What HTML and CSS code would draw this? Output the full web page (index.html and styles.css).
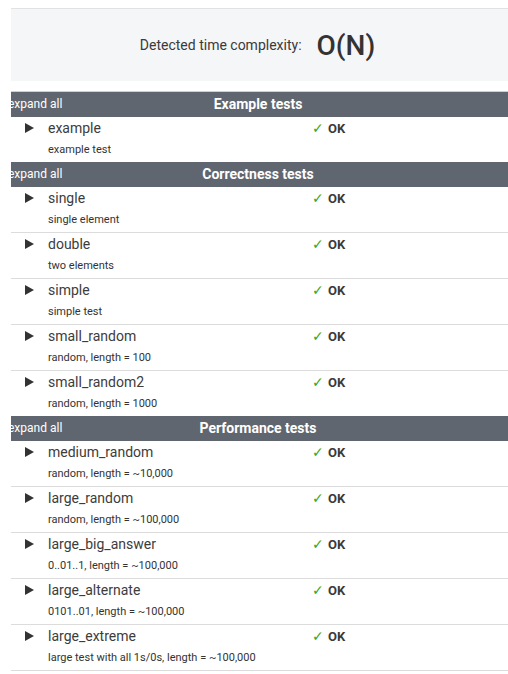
FILE: index.html
```html
<!DOCTYPE html>
<html>
<head>
<meta charset="utf-8">
<link rel="stylesheet" href="styles.css">
</head>
<body>
<div class="page">
  <div class="summary">
    <span class="summary-label">Detected time complexity:</span>
    <span class="summary-value">O(N)</span>
  </div>

  <div class="group">
    <div class="group-head"><span class="expand">expand all</span><span class="group-title">Example tests</span></div>
    <div class="row"><span class="tri"></span><div class="info"><div class="name">example</div><div class="desc">example test</div></div><div class="res"><span class="check">✓</span> OK</div></div>
  </div>

  <div class="group">
    <div class="group-head"><span class="expand">expand all</span><span class="group-title">Correctness tests</span></div>
    <div class="row"><span class="tri"></span><div class="info"><div class="name">single</div><div class="desc">single element</div></div><div class="res"><span class="check">✓</span> OK</div></div>
    <div class="row"><span class="tri"></span><div class="info"><div class="name">double</div><div class="desc">two elements</div></div><div class="res"><span class="check">✓</span> OK</div></div>
    <div class="row"><span class="tri"></span><div class="info"><div class="name">simple</div><div class="desc">simple test</div></div><div class="res"><span class="check">✓</span> OK</div></div>
    <div class="row"><span class="tri"></span><div class="info"><div class="name">small_random</div><div class="desc">random, length = 100</div></div><div class="res"><span class="check">✓</span> OK</div></div>
    <div class="row"><span class="tri"></span><div class="info"><div class="name">small_random2</div><div class="desc">random, length = 1000</div></div><div class="res"><span class="check">✓</span> OK</div></div>
  </div>

  <div class="group">
    <div class="group-head"><span class="expand">expand all</span><span class="group-title">Performance tests</span></div>
    <div class="row"><span class="tri"></span><div class="info"><div class="name">medium_random</div><div class="desc">random, length = ~10,000</div></div><div class="res"><span class="check">✓</span> OK</div></div>
    <div class="row"><span class="tri"></span><div class="info"><div class="name">large_random</div><div class="desc">random, length = ~100,000</div></div><div class="res"><span class="check">✓</span> OK</div></div>
    <div class="row"><span class="tri"></span><div class="info"><div class="name">large_big_answer</div><div class="desc">0..01..1, length = ~100,000</div></div><div class="res"><span class="check">✓</span> OK</div></div>
    <div class="row"><span class="tri"></span><div class="info"><div class="name">large_alternate</div><div class="desc">0101..01, length = ~100,000</div></div><div class="res"><span class="check">✓</span> OK</div></div>
    <div class="row"><span class="tri"></span><div class="info"><div class="name">large_extreme</div><div class="desc">large test with all 1s/0s, length = ~100,000</div></div><div class="res"><span class="check">✓</span> OK</div></div>
  </div>
</div>
</body>
</html>
```

FILE: styles.css
```css
html, body {
  margin: 0;
  padding: 0;
  background: #ffffff;
}
body {
  padding: 8px 0 0 11px;
  font-family: Roboto, "Liberation Sans", sans-serif;
  color: #333;
  overflow: hidden;
}
.page {
  width: 497px;
}
.summary {
  border-top: 1px solid #e2e2e2;
  background: #f5f6f8;
  height: 72px;
  display: flex;
  align-items: center;
  justify-content: center;
  gap: 15px;
  padding-right: 4px;
  margin-bottom: 10px;
}
.summary-label {
  font-size: 14px;
  color: #3a3a3a;
}
.summary-value {
  font-size: 28px;
  color: #333;
  font-weight: 500;
}
.group {
  display: flex;
  flex-direction: column;
}
.group-head {
  position: relative;
  overflow: hidden;
  background: #5f6670;
  height: 24px;
  padding-bottom: 1px;
  display: flex;
  align-items: center;
  justify-content: center;
  color: #fff;
}
.summary + .group .group-head {
  border-top: 1px solid #d0d0d0;
}
.expand {
  position: absolute;
  left: -3px;
  top: 0;
  bottom: 1px;
  display: flex;
  align-items: center;
  font-size: 12px;
}
.group-title {
  font-size: 14px;
  font-weight: 700;
  margin-right: 3px;
}
.row {
  display: grid;
  grid-template-columns: 37px 264px 1fr;
  height: 45px;
  border-bottom: 1px solid #dcdcdc;
}
.group .row:last-child {
  border-bottom: none;
}
.group:last-child .row:last-child {
  border-bottom: 1px solid #dcdcdc;
}
.tri {
  margin: 6px 0 0 14px;
  width: 0;
  height: 0;
  border-top: 5px solid transparent;
  border-bottom: 5px solid transparent;
  border-left: 9px solid #333;
}
.info {
  display: flex;
  flex-direction: column;
}
.name {
  font-size: 14px;
  line-height: 22px;
  color: #3c3c3c;
}
.desc {
  font-size: 11px;
  line-height: 20px;
  padding-top: 1px;
  color: #333;
}
.res {
  font-size: 13px;
  font-weight: 700;
  line-height: 22px;
  color: #3a3a3a;
}
.check {
  color: #2eaa2e;
  font-weight: 400;
  font-family: "DejaVu Sans", sans-serif;
  font-size: 14px;
  margin-right: 1px;
}
```
